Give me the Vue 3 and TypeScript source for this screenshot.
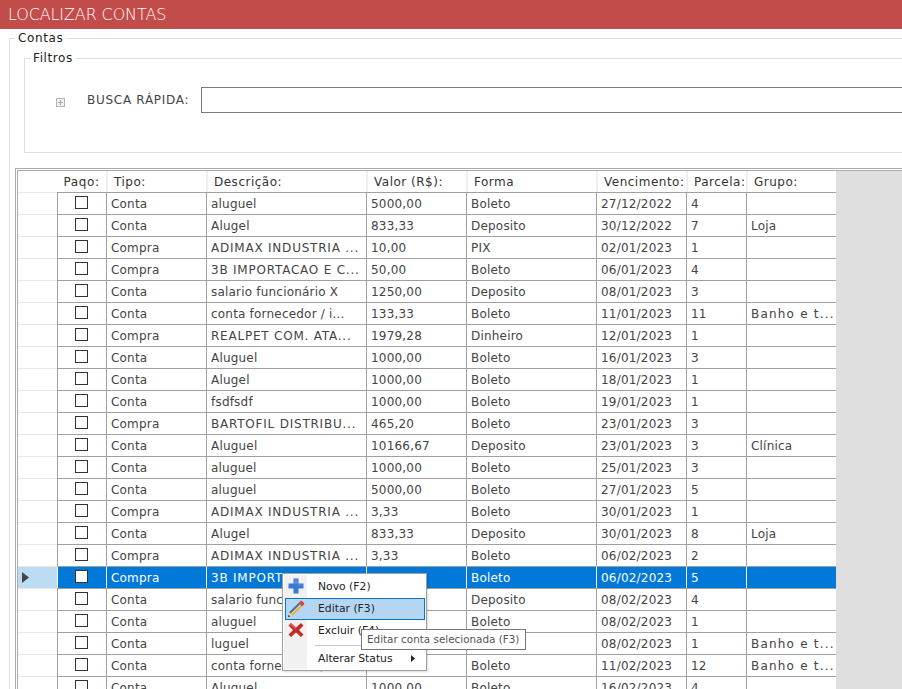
<script setup lang="ts">
interface Row { tipo: string; desc: string; valor: string; forma: string; venc: string; parc: string; grupo: string }
const raw: string[] = [
  'Conta|aluguel|5000,00|Boleto|27/12/2022|4|',
  'Conta|Alugel|833,33|Deposito|30/12/2022|7|Loja',
  'Compra|ADIMAX INDUSTRIA ...|10,00|PIX|02/01/2023|1|',
  'Compra|3B IMPORTACAO E C...|50,00|Boleto|06/01/2023|4|',
  'Conta|salario funcionário X|1250,00|Deposito|08/01/2023|3|',
  'Conta|conta fornecedor / i...|133,33|Boleto|11/01/2023|11|Banho e t...',
  'Compra|REALPET COM. ATA...|1979,28|Dinheiro|12/01/2023|1|',
  'Conta|Aluguel|1000,00|Boleto|16/01/2023|3|',
  'Conta|Alugel|1000,00|Boleto|18/01/2023|1|',
  'Conta|fsdfsdf|1000,00|Boleto|19/01/2023|1|',
  'Compra|BARTOFIL DISTRIBU...|465,20|Boleto|23/01/2023|3|',
  'Conta|Aluguel|10166,67|Deposito|23/01/2023|3|Clínica',
  'Conta|aluguel|1000,00|Boleto|25/01/2023|3|',
  'Conta|aluguel|5000,00|Boleto|27/01/2023|5|',
  'Compra|ADIMAX INDUSTRIA ...|3,33|Boleto|30/01/2023|1|',
  'Conta|Alugel|833,33|Deposito|30/01/2023|8|Loja',
  'Compra|ADIMAX INDUSTRIA ...|3,33|Boleto|06/02/2023|2|',
  'Compra|3B IMPORTACAO E C...|50,00|Boleto|06/02/2023|5|',
  'Conta|salario funcionário X|1250,00|Deposito|08/02/2023|4|',
  'Conta|aluguel|1000,00|Boleto|08/02/2023|1|',
  'Conta|luguel|1000,00|Boleto|08/02/2023|1|Banho e t...',
  'Conta|conta fornecedor / i...|133,33|Boleto|11/02/2023|12|Banho e t...',
  'Conta|Aluguel|1000,00|Boleto|16/02/2023|4|',
]
const rows: Row[] = raw.map((line) => {
  const [tipo, desc, valor, forma, venc, parc, grupo] = line.split('|')
  return { tipo, desc, valor, forma, venc, parc, grupo }
})
const heads: string[] = ['Paqo:', 'Tipo:', 'Descrição:', 'Valor (R$):', 'Forma', 'Vencimento:', 'Parcela:', 'Grupo:']
const selected = 17
const isCaps = (s: string): boolean => s === s.toUpperCase()
</script>

<template>
  <div class="page">
    <div class="title">LOCALIZAR CONTAS</div>
    <fieldset class="contas">
      <legend>Contas</legend>
      <fieldset class="filtros">
        <legend>Filtros</legend>
        <div class="busca">
          <span class="expander"><svg width="9" height="9" viewBox="0 0 9 9"><rect x="0.5" y="0.5" width="8" height="8" fill="#f2f2f2" stroke="#b4b4b4"/><path d="M2 4.5h5M4.5 2v5" stroke="#a8a8a8" fill="none"/></svg></span>
          <label>BUSCA RÁPIDA:</label>
          <div class="input"></div>
        </div>
      </fieldset>
      <div class="grid">
        <div class="grid-inner">
          <div class="head">
            <div class="rh"></div>
            <div v-for="(h, i) in heads" :key="h" class="hc" :class="'c' + i">{{ h }}</div>
          </div>
          <div v-for="(r, i) in rows" :key="i" class="row" :class="{ sel: i === selected }">
            <div class="rh"><svg v-if="i === selected" width="7" height="11" viewBox="0 0 7 11"><path d="M0 0l7 5.500-7 5.500z" fill="#444"/></svg></div>
            <div class="td c0 chk"><span class="box"></span></div>
            <div class="td c1">{{ r.tipo }}</div>
            <div class="td c2" :class="{ wide: isCaps(r.desc) }">{{ r.desc }}</div>
            <div class="td c3">{{ r.valor }}</div>
            <div class="td c4">{{ r.forma }}</div>
            <div class="td c5">{{ r.venc }}</div>
            <div class="td c6">{{ r.parc }}</div>
            <div class="td c7" :class="{ cut: r.grupo.endsWith('...') }">{{ r.grupo }}</div>
          </div>
        </div>
      </div>
    </fieldset>

    <div class="menu">
      <div class="mi">
        <span class="ic"><svg width="16" height="16" viewBox="0 0 16 16"><path d="M5.500 0.500h5v5h5v5h-5v5h-5v-5h-5v-5h5z" fill="#3a78d6"/><path d="M6.500 1.500h3v5h5v1h-5v-1.500h-3z" fill="#5b92e4"/></svg></span>
        <span>Novo (F2)</span>
      </div>
      <div class="mi hot">
        <span class="ic"><svg width="18" height="18" viewBox="0 0 18 18"><path d="M1 17l1.200-4.700 3.500 3.500z" fill="#f3d9a8"/><path d="M1 17l.6-2.300 1.700 1.700z" fill="#1d3557"/><path d="M2.200 12.300L11.500 3l3.500 3.500-9.300 9.300z" fill="#f0a93b"/><path d="M2.200 12.300L11.500 3l1.500 1.500-9.300 9.300z" fill="#2a78d0"/><path d="M3.700 13.800L13 4.500l.8.800-9.300 9.300z" fill="#f7d368"/><path d="M11.500 3l1.800-1.800c.6-.6 1.400-.6 2 0l1.500 1.500c.6.6.6 1.400 0 2L15 6.500z" fill="#d2493f"/></svg></span>
        <span>Editar (F3)</span>
      </div>
      <div class="mi">
        <span class="ic"><svg width="16" height="16" viewBox="0 0 16 16"><path d="M3 1l5 4.500L13 1l2.500 2.500L11 8l4.500 4.500-2.500 2.500L8 10.500 3 15 .5 12.500 5 8 .5 3.500z" fill="#c62a2d"/><path d="M3 1l5 4.500v2L2 3z" fill="#dc5a58"/></svg></span>
        <span>Excluir (F4)</span>
      </div>
      <div class="sep"></div>
      <div class="mi">
        <span class="ic"></span>
        <span>Alterar Status</span>
        <svg class="arrow" width="4" height="7" viewBox="0 0 4 7"><path d="M0 0l4 3.500L0 7z" fill="#222"/></svg>
      </div>
    </div>
    <div class="tip">Editar conta selecionada (F3)</div>
  </div>
</template>

<style>
html, body { margin: 0; background: #fff; }
</style>

<style scoped>
.page {
  position: relative;
  width: 902px;
  height: 689px;
  overflow: hidden;
  background: #fff;
  font-family: "DejaVu Sans", Verdana, sans-serif;
  font-size: 12px;
  color: #444;
}
.title {
  height: 29px;
  line-height: 29px;
  background: #c24c4a;
  color: #fff;
  font-size: 16px;
  letter-spacing: -0.12px;
  padding-left: 8px;
  font-family: "DejaVu Sans", sans-serif;
  font-weight: 200;
}
fieldset { margin: 0; min-width: 0; }
legend { color: #222; padding: 0 3px; line-height: 17px; font-size: 12px; letter-spacing: 0.6px; }
.contas {
  margin: 1px -100px 0 9px;
  border: 1px solid #dfdfdf;
  border-width: 1px 0 0 1px;
  padding: 0 0 0 5px;
  height: 700px;
}
.filtros {
  margin: 3px 0 0 9px;
  border: 1px solid #dfdfdf;
  padding: 0 0 0 5px;
  height: 101px;
  box-sizing: content-box;
}
.busca { display: flex; align-items: center; height: 26px; margin-top: 20px; margin-left: -5px; }
.expander { width: 9px; height: 9px; margin-left: 31px; margin-top: 4px; display: flex; }
label { margin-left: 22px; width: 114px; letter-spacing: 0.72px; white-space: nowrap; }
.input { flex: 1; height: 24px; border: 1px solid #7a7a7a; }
.grid {
  margin-top: 15px;
  border: 1px solid #ababab;
  border-width: 1px 0 0 1px;
  padding: 1px 0 0 1px;
  background: #fff;
}
.grid-inner {
  border: 1px solid #ababab;
  border-width: 1px 0 0 1px;
  background: #dfdfdf;
}
.head, .row { display: flex; width: 818px; background: #fff; }
.head { height: 21px; }
.rh { width: 39px; flex: none; display: flex; align-items: center; padding-left: 4px; box-sizing: border-box; }
.row { height: 22px; }
.row .rh { border-top: 1px solid #e6e6e6; height: 22px; }
.head .rh { height: 21px; }
.hc {
  box-sizing: border-box;
  height: 21px;
  padding-top: 1px;
  line-height: 21px;
  color: #333;
  border-left: 2px solid #efefef;
  padding-left: 6px;
  letter-spacing: 0.5px;
  white-space: nowrap;
  overflow: hidden;
}
.hc.c0 { border-left: 0; text-align: center; padding-left: 0; letter-spacing: 0.6px; }
.td {
  box-sizing: border-box;
  height: 22px;
  line-height: 22px;
  border-top: 1px solid #a0a0a0;
  border-left: 1px solid #a0a0a0;
  padding-left: 4px;
  white-space: nowrap;
  overflow: hidden;
  letter-spacing: 0.2px;
}
.td.wide { letter-spacing: 0.78px; }
.td.cut { letter-spacing: 1.2px; }
.c0 { width: 49px; }
.c1 { width: 100px; }
.c2 { width: 160px; }
.c3 { width: 100px; }
.c4 { width: 130px; }
.c5 { width: 90px; }
.c6 { width: 60px; }
.c7 { width: 90px; }
.chk { display: flex; justify-content: center; align-items: flex-start; padding: 3px 1px 0 0; }
.box { width: 11px; height: 11px; border: 1px solid #333; background: #fff; }
.sel .rh { background: #bcdcf4; }
.sel .td { background: #0078d7; color: #fff; border-left-color: #fff; }
.menu {
  position: absolute;
  left: 282px;
  top: 573px;
  width: 145px;
  height: 98px;
  box-sizing: border-box;
  background: #fff;
  border: 1px solid #a0a0a0;
  padding: 2px 1px 2px 2px;
  font-size: 10.8px;
  color: #222;
  box-shadow: 1px 1px 2px rgba(0, 0, 0, 0.15);
}
.menu::before {
  content: "";
  position: absolute;
  left: 1px;
  top: 1px;
  bottom: 1px;
  width: 23px;
  background: #f1f1f1;
}
.mi { position: relative; display: flex; align-items: center; height: 22px; top: -1px; }
.hot { background: #b5d6f2; box-shadow: inset 0 0 0 1px #0a74c8; top: 0; line-height: 20px; }
.ic { width: 21px; margin-right: 12px; display: flex; justify-content: center; align-items: center; }
.sep { position: relative; height: 1px; margin: 3px 0 2px 30px; background: #c8c8c8; }
.arrow { margin-left: auto; margin-right: 10px; }
.tip {
  position: absolute;
  left: 361px;
  top: 629px;
  height: 21px;
  width: 165px;
  box-sizing: border-box;
  line-height: 18px;
  padding-left: 5px;
  background: #fff;
  border: 1px solid #767676;
  font-size: 10.4px;
  color: #555;
  white-space: nowrap;
}
</style>
